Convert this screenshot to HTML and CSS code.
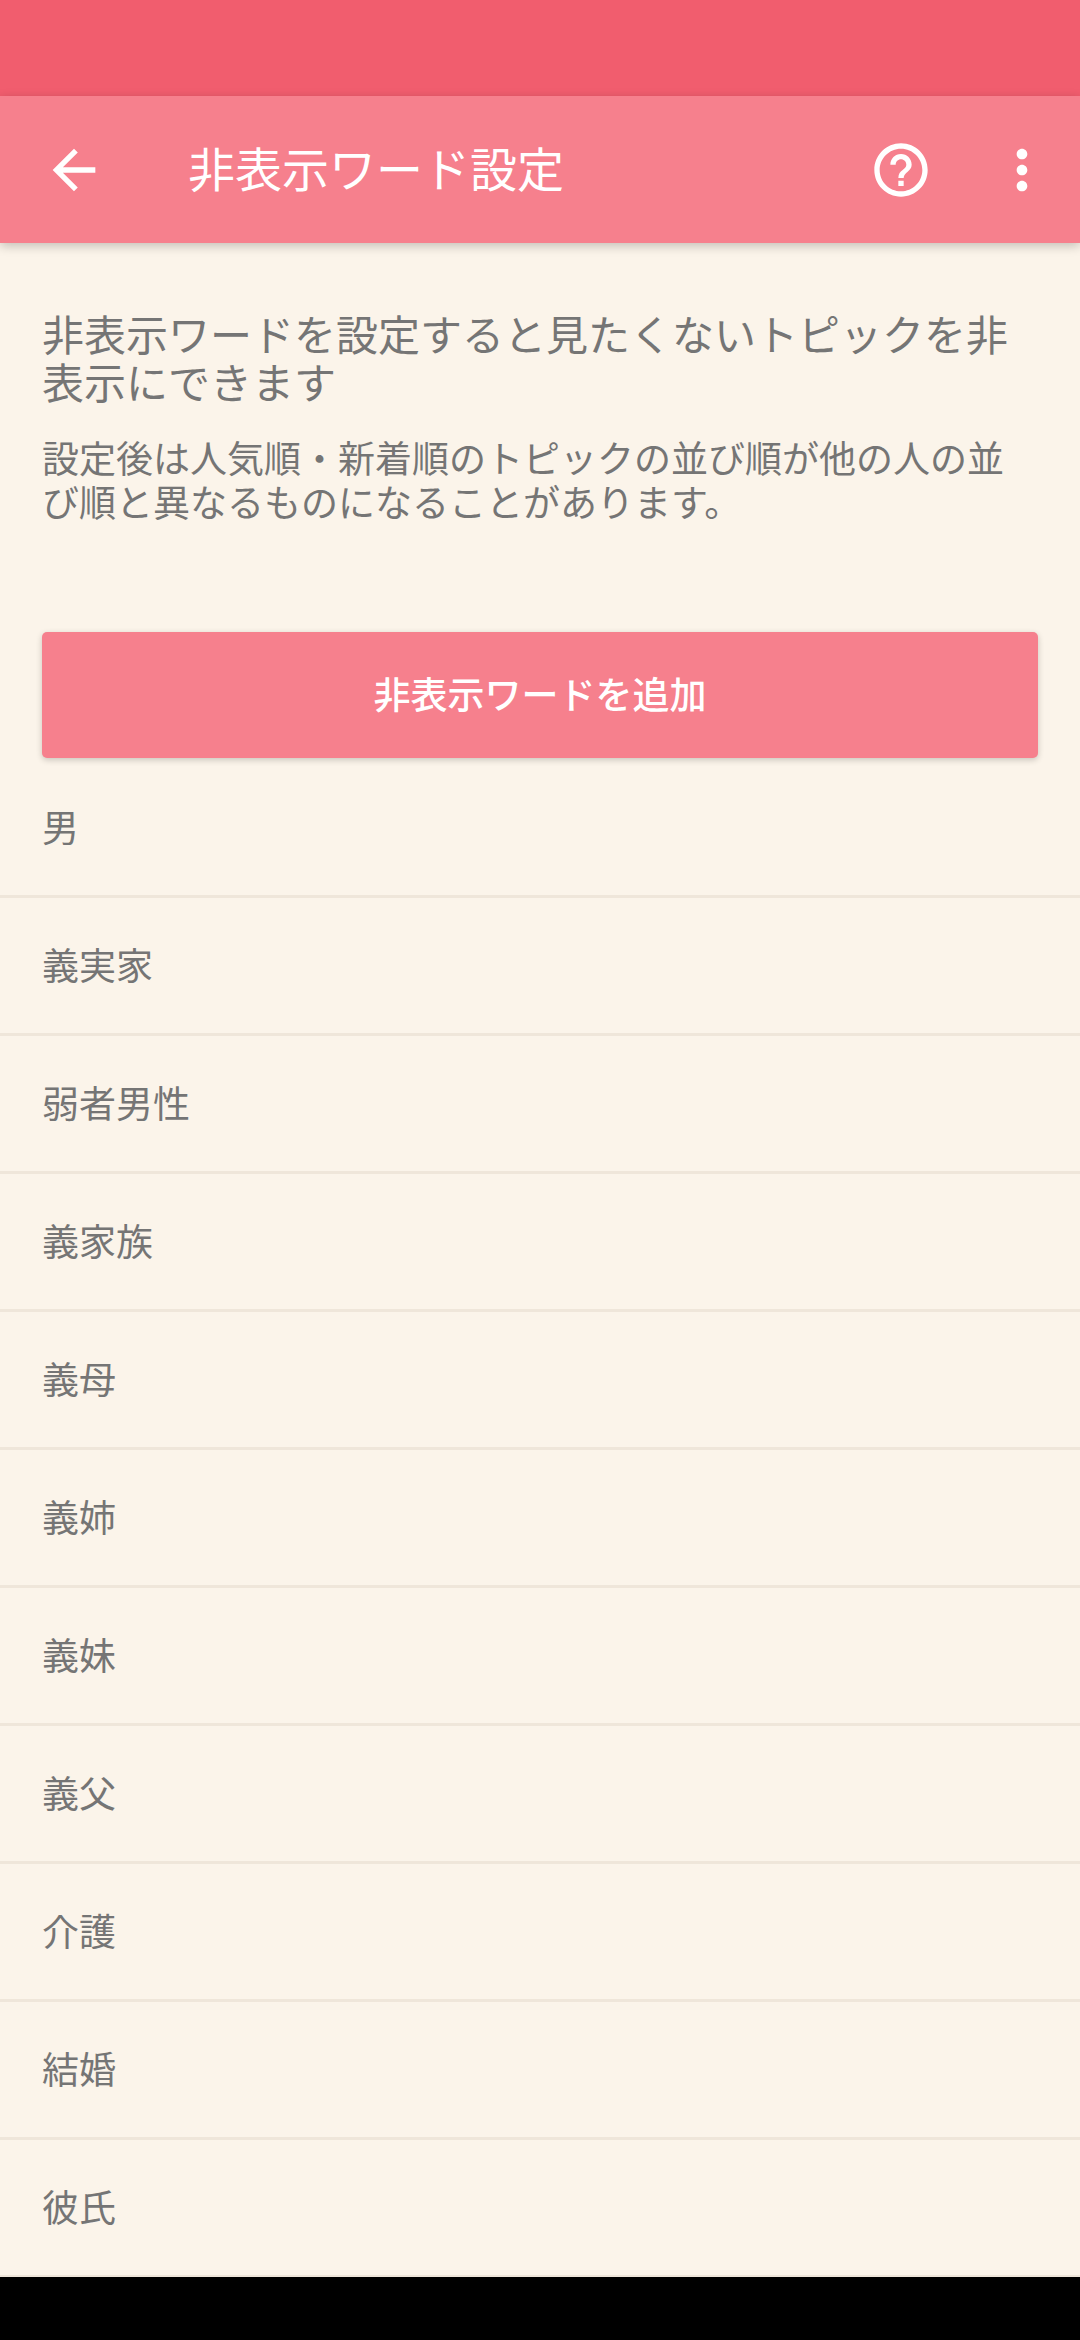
FILE: index.html
```html
<!DOCTYPE html>
<html lang="ja">
<head>
  <meta charset="UTF-8" />
  <meta name="viewport" content="width=device-width, initial-scale=1.0" />
  <title>非表示ワード設定</title>
  <link rel="stylesheet" href="styles.css">
</head>
<body>
  <div class="screen">
    <div class="status-bar"></div>

    <header class="app-bar">
      <svg class="icon back-icon" viewBox="0 0 24 24"><path d="M20 11H7.83l5.59-5.59L12 4l-8 8 8 8 1.41-1.41L7.83 13H20v-2z"/></svg>
      <h1 class="app-title">非表示ワード設定</h1>
      <div class="app-actions">
        <svg class="icon" viewBox="0 0 24 24"><path d="M11 18h2v-2h-2v2zm1-16C6.48 2 2 6.48 2 12s4.48 10 10 10 10-4.48 10-10S17.52 2 12 2zm0 18c-4.41 0-8-3.59-8-8s3.59-8 8-8 8 3.59 8 8-3.59 8-8 8zm0-14c-2.21 0-4 1.79-4 4h2c0-1.1.9-2 2-2s2 .9 2 2c0 2-3 1.75-3 5h2c0-2.25 3-2.5 3-5 0-2.21-1.79-4-4-4z"/></svg>
        <svg class="icon" viewBox="0 0 24 24"><path d="M12 8c1.1 0 2-.9 2-2s-.9-2-2-2-2 .9-2 2 .9 2 2 2zm0 2c-1.1 0-2 .9-2 2s.9 2 2 2 2-.9 2-2-.9-2-2-2zm0 6c-1.1 0-2 .9-2 2s.9 2 2 2 2-.9 2-2-.9-2-2-2z"/></svg>
      </div>
    </header>

    <main class="content">
      <section class="intro">
        <p class="intro-lead">非表示ワードを設定すると見たくないトピックを非表示にできます</p>
        <p class="intro-note">設定後は人気順・新着順のトピックの並び順が他の人の並び順と異なるものになることがあります。</p>
      </section>

      <button class="add-button">非表示ワードを追加</button>

      <ul class="word-list">
        <li class="word-item">男</li>
        <li class="word-item">義実家</li>
        <li class="word-item">弱者男性</li>
        <li class="word-item">義家族</li>
        <li class="word-item">義母</li>
        <li class="word-item">義姉</li>
        <li class="word-item">義妹</li>
        <li class="word-item">義父</li>
        <li class="word-item">介護</li>
        <li class="word-item">結婚</li>
        <li class="word-item">彼氏</li>
      </ul>
    </main>
  </div>
</body>
</html>
```

FILE: styles.css
```css
* {
  box-sizing: border-box;
}

html, body {
  margin: 0;
  background-color: #000000;
}

body {
  font-family: "Noto Sans CJK JP", "Noto Sans", sans-serif;
  color: #757575;
}

.screen {
  display: flex;
  flex-direction: column;
  height: 2277px;
  overflow: hidden;
  background-color: #fbf4ea;
}

.status-bar {
  flex: none;
  height: 96px;
  background-color: #f15d6e;
}

.app-bar {
  flex: none;
  display: flex;
  align-items: center;
  height: 147px;
  padding: 0 26px 0 42px;
  background-color: #f6808d;
  box-shadow: 0 3px 10px rgba(0, 0, 0, 0.22);
  position: relative;
}

.icon {
  display: block;
  width: 64px;
  height: 64px;
  fill: #ffffff;
}

.back-icon {
  margin-right: 82px;
}

.app-title {
  margin: 0 0 6px;
  font-size: 47px;
  font-weight: 400;
  color: #ffffff;
}

.app-actions {
  display: flex;
  gap: 57px;
  margin-left: auto;
}

.content {
  flex: 1;
  padding-top: 66px;
}

.intro {
  padding: 0 42px;
}

.intro-lead {
  margin: 0 0 30px;
  font-size: 42px;
  line-height: 48px;
}

.intro-note {
  margin: 0;
  font-size: 37px;
  line-height: 44px;
}

.add-button {
  display: block;
  width: 996px;
  height: 126px;
  margin: 109px 42px 0;
  padding: 0 0 4px;
  border: none;
  border-radius: 5px;
  background-color: #f6808d;
  box-shadow: 0 2px 6px rgba(0, 0, 0, 0.2);
  font-family: inherit;
  font-size: 37px;
  font-weight: 500;
  color: #ffffff;
}

.word-list {
  margin: 2px 0 0;
  padding: 0;
  list-style: none;
}

.word-item {
  display: flex;
  align-items: center;
  height: 138px;
  padding: 0 42px 4px;
  border-bottom: 3px solid #efe6da;
  font-size: 37px;
}
```
